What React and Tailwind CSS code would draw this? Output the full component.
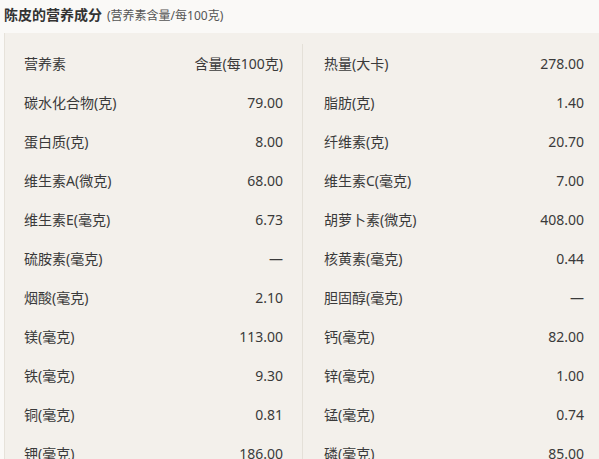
const left = [
  ['营养素', '含量(每100克)'],
  ['碳水化合物(克)', '79.00'],
  ['蛋白质(克)', '8.00'],
  ['维生素A(微克)', '68.00'],
  ['维生素E(毫克)', '6.73'],
  ['硫胺素(毫克)', '—'],
  ['烟酸(毫克)', '2.10'],
  ['镁(毫克)', '113.00'],
  ['铁(毫克)', '9.30'],
  ['铜(毫克)', '0.81'],
  ['钾(毫克)', '186.00'],
]

const right = [
  ['热量(大卡)', '278.00'],
  ['脂肪(克)', '1.40'],
  ['纤维素(克)', '20.70'],
  ['维生素C(毫克)', '7.00'],
  ['胡萝卜素(微克)', '408.00'],
  ['核黄素(毫克)', '0.44'],
  ['胆固醇(毫克)', '—'],
  ['钙(毫克)', '82.00'],
  ['锌(毫克)', '1.00'],
  ['锰(毫克)', '0.74'],
  ['磷(毫克)', '85.00'],
]

function Column({ rows, className }) {
  return (
    <ul className={className}>
      {rows.map(([name, value]) => (
        <li key={name} className="flex h-[39px] items-center justify-between">
          <span>{name}</span>
          <span>{value}</span>
        </li>
      ))}
    </ul>
  )
}

export default function App() {
  return (
    <div className="h-[459px] overflow-hidden bg-[#faf9f7] text-[#333] font-['Noto_Sans','Noto_Sans_CJK_SC',sans-serif]">
      <h3 className="flex items-baseline pl-[4px] pt-[4px] h-[33px]">
        <span className="text-[14px] font-bold text-[#333]">陈皮的营养成分</span>
        <span className="ml-[5px] text-[12px] text-[#555]">(营养素含量/每100克)</span>
      </h3>
      <div className="ml-[4px] grid grid-cols-[297px_1fr] border-l border-[#e6e2da] bg-[#f3f0eb] pt-[11px] text-[14px] text-[#3a3a3a]">
        <Column rows={left} className="pl-[19px] pr-[19px]" />
        <Column rows={right} className="border-l border-[#e4e0d8] pl-[21px] pr-[15px]" />
      </div>
    </div>
  )
}
